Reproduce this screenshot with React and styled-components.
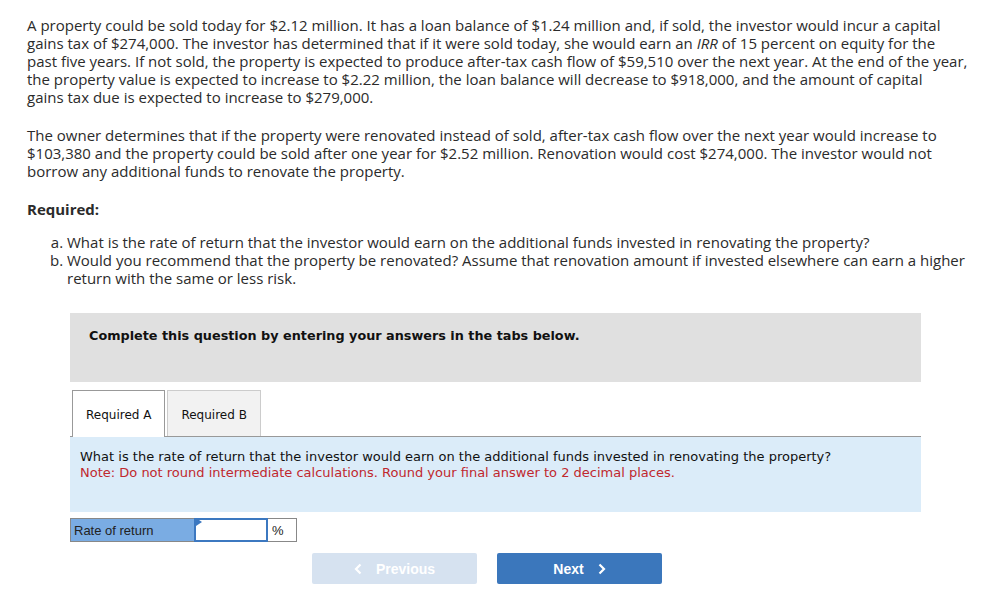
import React from 'react'
import styled, { createGlobalStyle } from 'styled-components'

const GlobalStyle = createGlobalStyle`
  body {
    margin: 0;
    background: #fff;
  }
`

const Page = styled.div`
  width: 997px;
  padding: 16px 0 0 27px;
  box-sizing: border-box;
  font-family: "Open Sans", "Liberation Sans", sans-serif;
  color: #2b2b2b;
`

const Para = styled.p`
  margin: 0 0 20px;
  width: 960px;
  font-size: 15px;
  line-height: 18px;
`

const Heading = styled.div`
  font-size: 15px;
  font-weight: 700;
  line-height: 18px;
  margin: 2px 0 15px;
`

const List = styled.ol`
  list-style: lower-alpha;
  margin: 0;
  padding-left: 40px;
  font-size: 15px;
  line-height: 18px;
  width: 905px;
`

const Question = styled.div`
  width: 851px;
  margin: 26px 0 0 43px;
  font-family: "DejaVu Sans", Verdana, sans-serif;
`

const Banner = styled.div`
  height: 69px;
  background: #e0e0e0;
  padding: 15px 19px 0;
  box-sizing: border-box;
  font-size: 12.8px;
  font-weight: 700;
  color: #111;
`

const Tabs = styled.div`
  display: flex;
  gap: 2px;
  margin-top: 8px;
  padding-left: 2px;
  border-bottom: 1px solid #999;
`

const Tab = styled.div`
  padding: 0 13px;
  display: flex;
  align-items: center;
  font-size: 12px;
  color: #111;
  box-sizing: border-box;
  border: 1px solid ${p => (p.active ? '#999' : '#ccc')};
  border-bottom: none;
  background: ${p => (p.active ? '#fff' : '#f2f2f2')};
  margin-bottom: ${p => (p.active ? '-1px' : '0')};
  height: ${p => (p.active ? '47px' : '46px')};
  padding-top: 2px;
`

const Prompt = styled.div`
  height: 75px;
  background: #dbecf9;
  padding: 12px 10px 0;
  box-sizing: border-box;
  font-size: 13px;
  line-height: 16px;
  color: #111;
`

const Note = styled.div`
  color: #c0282e;
`

const AnswerRow = styled.div`
  display: flex;
  margin-top: 6px;
  height: 24px;
  font-family: "Liberation Sans", Arial, sans-serif;
  font-size: 13px;
`

const Label = styled.div`
  width: 124px;
  box-sizing: border-box;
  background: #7aace3;
  border: 1px solid #888;
  border-right: none;
  padding-left: 3px;
  display: flex;
  align-items: center;
  color: #222;
`

const Input = styled.div`
  position: relative;
  width: 74px;
  box-sizing: border-box;
  background: #fff;
  border: 2px solid #3c78c0;
`

const Flag = styled.span`
  position: absolute;
  left: 0;
  top: 0;
  width: 0;
  height: 0;
  border-top: 4px solid transparent;
  border-bottom: 4px solid transparent;
  border-left: 6px solid #3c78c0;
  transform: translateY(-2px);
`

const Unit = styled.div`
  width: 29px;
  box-sizing: border-box;
  border: 1px solid #888;
  border-left: none;
  padding-left: 4px;
  display: flex;
  align-items: center;
  color: #222;
`

const Nav = styled.div`
  display: flex;
  gap: 20px;
  margin: 11px 0 0 242px;
`

const NavButton = styled.button`
  width: 165px;
  height: 31px;
  border: none;
  border-radius: 2px;
  background: ${p => (p.disabled ? '#d6e2f0' : '#3b77bc')};
  color: #fff;
  font-family: "Liberation Sans", Arial, sans-serif;
  font-size: 14px;
  font-weight: 700;
  display: flex;
  align-items: center;
  justify-content: center;
  gap: 14px;
  cursor: pointer;
`

const Chevron = ({ dir }) => (
  <svg width="8" height="12" viewBox="0 0 8 12">
    <path
      d={dir === 'left' ? 'M6.5 1.5 L2 6 L6.5 10.5' : 'M1.5 1.5 L6 6 L1.5 10.5'}
      fill="none"
      stroke="#fff"
      strokeWidth="2.2"
    />
  </svg>
)

export default function App() {
  return (
    <>
      <GlobalStyle />
      <Page>
        <Para>
          A property could be sold today for $2.12 million. It has a loan balance of $1.24 million and, if sold, the investor would incur a capital<br />
          gains tax of $274,000. The investor has determined that if it were sold today, she would earn an <i>IRR</i> of 15 percent on equity for the<br />
          past five years. If not sold, the property is expected to produce after-tax cash flow of $59,510 over the next year. At the end of the year,<br />
          the property value is expected to increase to $2.22 million, the loan balance will decrease to $918,000, and the amount of capital<br />
          gains tax due is expected to increase to $279,000.
        </Para>
        <Para>
          The owner determines that if the property were renovated instead of sold, after-tax cash flow over the next year would increase to<br />
          $103,380 and the property could be sold after one year for $2.52 million. Renovation would cost $274,000. The investor would not<br />
          borrow any additional funds to renovate the property.
        </Para>
        <Heading>Required:</Heading>
        <List>
          <li>What is the rate of return that the investor would earn on the additional funds invested in renovating the property?</li>
          <li>Would you recommend that the property be renovated? Assume that renovation amount if invested elsewhere can earn a higher return with the same or less risk.</li>
        </List>
        <Question>
          <Banner>Complete this question by entering your answers in the tabs below.</Banner>
          <Tabs>
            <Tab active>Required A</Tab>
            <Tab>Required B</Tab>
          </Tabs>
          <Prompt>
            What is the rate of return that the investor would earn on the additional funds invested in renovating the property?
            <Note>Note: Do not round intermediate calculations. Round your final answer to 2 decimal places.</Note>
          </Prompt>
          <AnswerRow>
            <Label>Rate of return</Label>
            <Input><Flag /></Input>
            <Unit>%</Unit>
          </AnswerRow>
          <Nav>
            <NavButton disabled><Chevron dir="left" />Previous</NavButton>
            <NavButton>Next<Chevron dir="right" /></NavButton>
          </Nav>
        </Question>
      </Page>
    </>
  )
}
